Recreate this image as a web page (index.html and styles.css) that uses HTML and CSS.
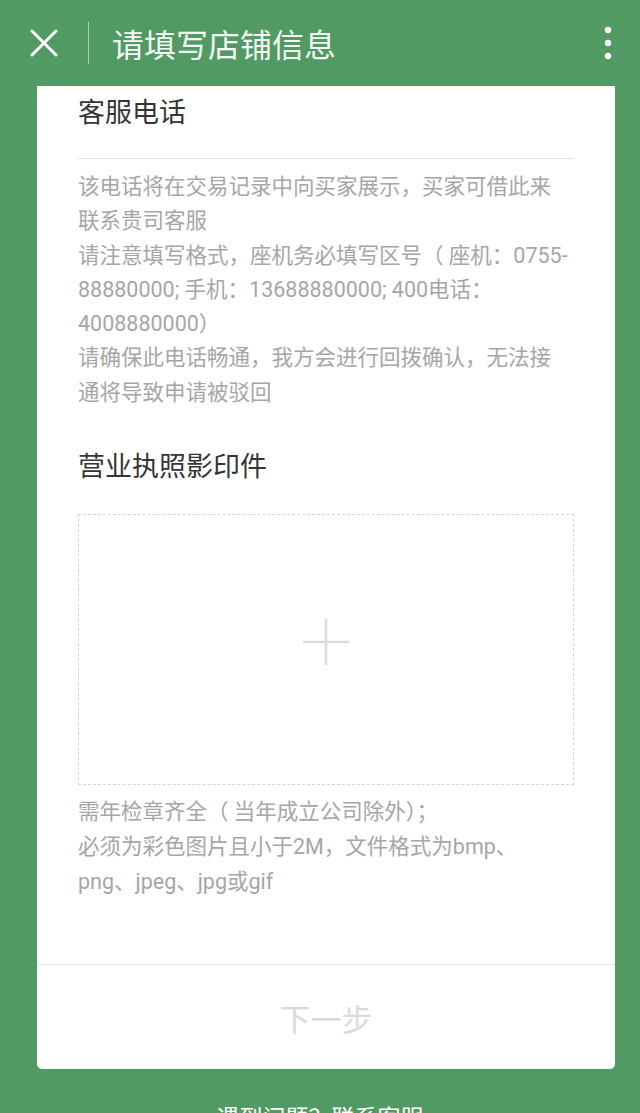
FILE: index.html
```html
<!DOCTYPE html>
<html lang="zh-CN">
<head>
<meta charset="utf-8">
<title>请填写店铺信息</title>
<link rel="stylesheet" href="styles.css">
</head>
<body>
<header class="topbar">
  <svg class="close" width="28" height="28" viewBox="0 0 28 28">
    <path d="M2 2 L26 26 M26 2 L2 26" stroke="#ffffff" stroke-width="3" stroke-linecap="round" fill="none"/>
  </svg>
  <span class="divider"></span>
  <h1 class="title">请填写店铺信息</h1>
  <svg class="more" width="8" height="34" viewBox="0 0 8 34">
    <circle cx="4" cy="4" r="3.2" fill="#ffffff"/>
    <circle cx="4" cy="17" r="3.2" fill="#ffffff"/>
    <circle cx="4" cy="30" r="3.2" fill="#ffffff"/>
  </svg>
</header>

<main class="card">
  <div class="content">
    <section class="field">
      <h2 class="label">客服电话</h2>
      <div class="input"></div>
      <p class="hint">该电话将在交易记录中向买家展示，买家可借此来<br>联系贵司客服<br>请注意填写格式，座机务必填写区号（ 座机：0755-<br>88880000; 手机：13688880000; 400电话：<br>4008880000）<br>请确保此电话畅通，我方会进行回拨确认，无法接<br>通将导致申请被驳回</p>
    </section>

    <section class="field field-upload">
      <h2 class="label">营业执照影印件</h2>
      <div class="upload">
        <svg class="plus" width="48" height="48" viewBox="0 0 48 48">
          <path d="M24 1 V47 M1 24 H47" stroke="#dcdcdc" stroke-width="2.5" fill="none"/>
        </svg>
      </div>
      <p class="hint hint-after">需年检章齐全（ 当年成立公司除外）；<br>必须为彩色图片且小于2M，文件格式为bmp、<br>png、jpeg、jpg或gif</p>
    </section>
  </div>
  <div class="footer">
    <button class="next" type="button">下一步</button>
  </div>
</main>

<p class="help">遇到问题？联系客服</p>
</body>
</html>
```

FILE: styles.css
```css
html, body {
  margin: 0;
  padding: 0;
}

body {
  background: #519a63;
  font-family: Roboto, "Noto Sans CJK SC", sans-serif;
  height: 1113px;
  overflow: hidden;
}

.topbar {
  height: 86px;
  display: flex;
  align-items: center;
  padding-left: 30px;
  padding-right: 28px;
  box-sizing: border-box;
}

.close {
  display: block;
  flex: none;
}

.divider {
  width: 1px;
  height: 42px;
  background: rgba(255, 255, 255, 0.55);
  margin-left: 30px;
  margin-top: 0;
  flex: none;
}

.title {
  margin: 0 0 0 23px;
  font-family: "Noto Sans CJK SC", sans-serif;
  font-weight: 400;
  font-size: 32px;
  line-height: 40px;
  color: #f4f8f4;
  flex: 1;
}

.more {
  display: block;
  flex: none;
}

.card {
  margin: 0 25px 0 37px;
  background: #ffffff;
  border-radius: 0 0 5px 5px;
}

.content {
  padding: 7px 41px 65px;
}

.label {
  margin: 0;
  font-family: "Noto Sans CJK SC", sans-serif;
  font-weight: 400;
  font-size: 27px;
  line-height: 36px;
  color: #353535;
}

.input {
  height: 29px;
  border-bottom: 1px solid #e6e6e6;
}

.hint {
  margin: 11px 0 0;
  font-size: 21.5px;
  line-height: 34.3px;
  color: #a6a6a6;
  white-space: nowrap;
}

.field-upload {
  margin-top: 37px;
}

.upload {
  margin-top: 31px;
  height: 269px;
  border: 1px dashed #d6d6d6;
  display: flex;
  align-items: center;
  justify-content: center;
  padding-bottom: 16px;
  box-sizing: content-box;
}

.upload {
  height: 253px;
}

.plus {
  display: block;
}

.hint-after {
  margin-top: 9px;
  line-height: 35px;
}

.footer {
  border-top: 1px solid #e4e4e4;
  height: 104px;
  display: flex;
  align-items: center;
  justify-content: center;
}

.next {
  border: 0;
  background: none;
  padding: 0;
  font-family: "Noto Sans CJK SC", sans-serif;
  font-size: 31px;
  line-height: 40px;
  color: #dadada;
  margin-top: 2px;
}

.help {
  margin: 32px 0 0;
  text-align: center;
  font-family: "Noto Sans CJK SC", sans-serif;
  font-size: 23px;
  line-height: 30px;
  color: #ffffff;
}
```
